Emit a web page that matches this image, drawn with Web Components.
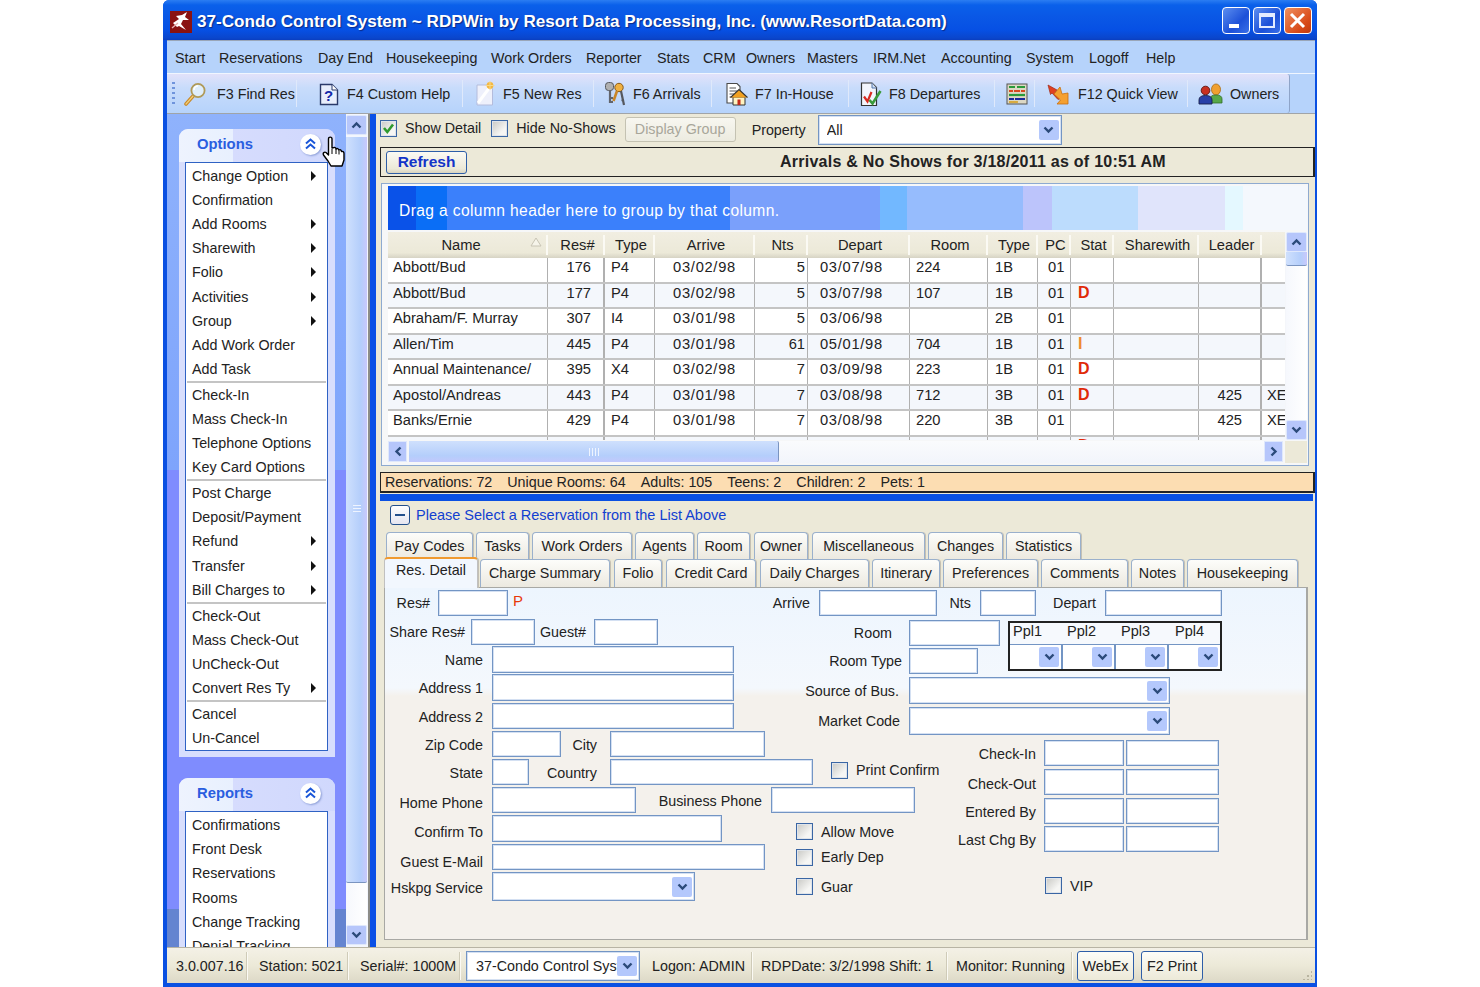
<!DOCTYPE html>
<html>
<head>
<meta charset="utf-8">
<title>RDPWin</title>
<style>
  html, body { margin: 0; padding: 0; background: #fff; }
</style>
</head>
<body>
<rdp-window>
  <rdp-titlebar>37-Condo Control System ~ RDPWin by Resort Data Processing, Inc. (www.ResortData.com)</rdp-titlebar>
  <rdp-menubar items="Start:44|Reservations:99|Day End:68|Housekeeping:105|Work Orders:95|Reporter:71|Stats:46|CRM:43|Owners:61|Masters:66|IRM.Net:68|Accounting:85|System:63|Logoff:57|Help:40"></rdp-menubar>
  <rdp-toolbar></rdp-toolbar>
  <rdp-workspace>
    <rdp-sidebar slot="side">
      <rdp-side-panel heading="Options" hand items="Change Option>|Confirmation|Add Rooms>|Sharewith>|Folio>|Activities>|Group>|Add Work Order|Add Task|-|Check-In|Mass Check-In|Telephone Options|Key Card Options|-|Post Charge|Deposit/Payment|Refund>|Transfer>|Bill Charges to>|-|Check-Out|Mass Check-Out|UnCheck-Out|Convert Res Ty>|-|Cancel|Un-Cancel"></rdp-side-panel>
      <rdp-side-panel heading="Reports" items="Confirmations|Front Desk|Reservations|Rooms|Change Tracking|Denial Tracking"></rdp-side-panel>
    </rdp-sidebar>
    <rdp-main slot="main">
      <rdp-filterbar></rdp-filterbar>
      <rdp-heading title-text="Arrivals &amp; No Shows for 3/18/2011 as of 10:51 AM"></rdp-heading>
      <rdp-grid></rdp-grid>
      <rdp-summary items="Reservations: 72|Unique Rooms: 64|Adults: 105|Teens: 2|Children: 2|Pets: 1"></rdp-summary>
      <rdp-detail heading="Please Select a Reservation from the List Above">
        <rdp-form></rdp-form>
      </rdp-detail>
    </rdp-main>
  </rdp-workspace>
  <rdp-statusbar></rdp-statusbar>
</rdp-window>

<script>
const TEXT = '#222';
const CHEVRON_DOWN = '<svg width="11" height="8" viewBox="0 0 11 8"><path d="M1.5 1.5L5.5 5.5L9.5 1.5" fill="none" stroke="#2b4a7a" stroke-width="2.4"/></svg>';
const CHEVRON_UP = '<svg width="11" height="8" viewBox="0 0 11 8"><path d="M1.5 6.5L5.5 2.5L9.5 6.5" fill="none" stroke="#2b4a7a" stroke-width="2.4"/></svg>';
const CHEVRON_LEFT = '<svg width="8" height="11" viewBox="0 0 8 11"><path d="M6.5 1.5L2.5 5.5L6.5 9.5" fill="none" stroke="#2b4a7a" stroke-width="2.4"/></svg>';
const CHEVRON_RIGHT = '<svg width="8" height="11" viewBox="0 0 8 11"><path d="M1.5 1.5L5.5 5.5L1.5 9.5" fill="none" stroke="#2b4a7a" stroke-width="2.4"/></svg>';

const ICONS = {
  find: '<svg width="24" height="24" viewBox="0 0 24 24"><path d="M3 22L11 13" stroke="#c98a2a" stroke-width="3.6" stroke-linecap="round"/><path d="M3 22L11 13" stroke="#f2cf7a" stroke-width="1.2" stroke-linecap="round"/><circle cx="15" cy="8.5" r="6.6" fill="#dfeefc" stroke="#b09a58" stroke-width="1.8"/><path d="M11 8a4 4 0 0 1 4-4" fill="none" stroke="#fff" stroke-width="1.6"/></svg>',
  help: '<svg width="20" height="24" viewBox="0 0 20 24"><path d="M1.5 2.5H13L18.5 8V22.5H1.5Z" fill="#e8eefc" stroke="#2a3a6a" stroke-width="1.4"/><path d="M13 2.5V8H18.5" fill="#fff" stroke="#2a3a6a" stroke-width="1"/><text x="9.5" y="19" font-family="Liberation Sans" font-weight="700" font-size="15" fill="#1428a8" text-anchor="middle">?</text></svg>',
  newres: '<svg width="20" height="26" viewBox="0 0 20 26"><path d="M2 4H14L17.5 7.5V24H2Z" fill="#eef0fb" stroke="#b4bcdc" stroke-width="1"/><path d="M3 22L15 6" stroke="#fff" stroke-width="3"/><circle cx="15" cy="4.5" r="3.4" fill="#f5b840"/><path d="M15 0V9M10.5 4.5H19.5" stroke="#f7d98a" stroke-width="1"/></svg>',
  keys: '<svg width="22" height="26" viewBox="0 0 22 26"><rect x="1.5" y="1.5" width="8" height="8" rx="3" fill="#b0b0b0" stroke="#55585e"/><path d="M6 9V22M6 17H9M6 21H9" stroke="#62656c" stroke-width="2.2" fill="none"/><circle cx="15" cy="6.5" r="4.2" fill="#efb040" stroke="#8a5a18"/><path d="M13 10L9.5 20" stroke="#c98628" stroke-width="2.6"/><path d="M17 10L20 24" stroke="#55585e" stroke-width="2.2"/><path d="M20 19L17.5 19.5" stroke="#55585e" stroke-width="1.6"/></svg>',
  inhouse: '<svg width="24" height="24" viewBox="0 0 24 24"><path d="M2 1.5H12L15 4.5V21H2Z" fill="#fff" stroke="#4a4a4a" stroke-width="1.1"/><path d="M4.5 6H11M4.5 9H12.5M4.5 12H9M4.5 15H8" stroke="#555" stroke-width="1"/><path d="M8 23V15H20V23Z" fill="#fff3c0" stroke="#333" stroke-width="1"/><path d="M5.5 15.5L14 7.5L22.5 15.5" fill="#f0a020" stroke="#333" stroke-width="1.1"/><rect x="12.5" y="17.5" width="3" height="5.5" fill="#c42a1a"/></svg>',
  depart: '<svg width="24" height="26" viewBox="0 0 24 26"><path d="M2.5 2H13L17.5 6.5V24.5H2.5Z" fill="#f2f5fc" stroke="#333" stroke-width="1.2"/><path d="M13 2V7H17.5" fill="#cfe0f7" stroke="#5577aa" stroke-width="1"/><path d="M5 15.5L8.5 20.5L12.5 11" fill="none" stroke="#d82a20" stroke-width="2.2"/><path d="M10.5 19L13.5 22.5L21.5 10" fill="none" stroke="#3a9a3a" stroke-width="2.6"/></svg>',
  board: '<svg width="22" height="24" viewBox="0 0 22 24"><rect x="1" y="2" width="20" height="20" fill="#dcd8c4" stroke="#555"/><path d="M3 5H9M11 5H19" stroke="#2a9a3a" stroke-width="2.2"/><path d="M3 9H7M8 9H14M15 9H19" stroke="#d84a20" stroke-width="2.2"/><path d="M3 13H19" stroke="#2a9a3a" stroke-width="2.2"/><path d="M3 17H8M9 17H19" stroke="#1a2a9a" stroke-width="2.2"/><path d="M3 20H12" stroke="#d8a020" stroke-width="1.6"/></svg>',
  quick: '<svg width="24" height="24" viewBox="0 0 24 24"><path d="M2 3L11 8L9.5 10L15 16L12 17.5L6 11L4.5 12.5Z" fill="#e04020" stroke="#a02818" stroke-width=".7"/><path d="M8 12L14 5L16 12L22 11V22H11L14.5 18Z" fill="#f5a030" stroke="#c87010" stroke-width=".8"/></svg>',
  owners: '<svg width="26" height="22" viewBox="0 0 26 22"><ellipse cx="18" cy="6.5" rx="4.5" ry="5.5" fill="#f0a030" stroke="#a86a10" stroke-width=".8"/><path d="M12 20V16Q12 12 18 12Q24 12 24 16V20Z" fill="#58a848" stroke="#30702a" stroke-width=".8"/><circle cx="7.5" cy="7.5" r="4.3" fill="#c83020" stroke="#5a1510" stroke-width=".9"/><path d="M1 21V17Q1 12.5 7.5 12.5Q14 12.5 14 17V21Z" fill="#2840a8" stroke="#18204a" stroke-width=".9"/></svg>'
};

class RdpElement extends HTMLElement {
  constructor() {
    super();
    this.attachShadow({ mode: 'open' });
  }
  connectedCallback() {
    this.shadowRoot.innerHTML = this.render();
  }
}

class RdpWindow extends RdpElement {
  render() {
    return `<style>
      :host { display: block; box-sizing: border-box; width: 1154px; height: 987px; margin-left: 163px;
        background: #0a50e2; padding: 0 2px 4px 4px; border-radius: 6px 6px 0 0; overflow: hidden;
        font: 14.3px "Liberation Sans", Arial, sans-serif; color: ${TEXT}; }
      .wrap { display: flex; flex-direction: column; height: 100%; }
    </style><div class="wrap"><slot></slot></div>`;
  }
}

class RdpTitlebar extends RdpElement {
  render() {
    const btn = (cls, inner) => `<span class="btn ${cls}">${inner}</span>`;
    return `<style>
      :host { display: flex; align-items: center; height: 40px; flex: none; margin: 0 -2px 0 -4px; padding: 4px 0 0 7px; box-sizing: border-box;
        background: linear-gradient(#2b7df2 0, #0a60ea 5px, #0a58e6 16px, #0650e4 30px, #0a46cc 38px, #0a3ec0 40px); }
      .logo { width: 22px; height: 22px; flex: none; display: block; }
      .text { margin-left: 5px; flex: 1; color: #fff; font-weight: 700; font-size: 17.13px; text-shadow: 1px 1px 1px #0a2a88; white-space: nowrap; }
      .btns { display: flex; gap: 3px; margin: -3px 5px 0 0; }
      .btn { width: 28px; height: 27px; box-sizing: border-box; border: 1px solid #fff; border-radius: 4px; position: relative; display: block;
        background: linear-gradient(135deg, #5c8ef0, #1c50d8 60%, #3a70e8); }
      .btn.close { background: linear-gradient(135deg, #f09060, #d84a18 70%, #c03a10); }
      .min::after { content: ""; position: absolute; left: 6px; bottom: 5px; width: 10px; height: 4px; background: #fff; }
      .max::after { content: ""; position: absolute; left: 5px; top: 5px; width: 16px; height: 15px; box-sizing: border-box; border: 2px solid #e4ecff; border-top-width: 4px; }
      svg { display: block; margin: 3px; }
    </style>
    <svg class="logo" viewBox="0 0 22 22" style="margin:0"><rect width="22" height="22" fill="#8a1212"/><path d="M3 12L9 8L6 5L12 4L17 1L15 6L19 9L13 9L11 13L16 19L9 15L7 16Z" fill="#fff"/><path d="M2 17L8 12" stroke="#e8b0b0" stroke-width="1.4"/></svg>
    <span class="text"><slot></slot></span>
    <span class="btns">${btn('min', '')}${btn('max', '')}${btn('close', '<svg width="19" height="19" viewBox="0 0 19 19"><path d="M3 3L16 16M16 3L3 16" stroke="#fff" stroke-width="3"/></svg>')}</span>`;
  }
}

class RdpMenubar extends RdpElement {
  render() {
    const items = this.getAttribute('items').split('|').map((it) => {
      const [label, w] = it.split(':');
      return `<span style="width:${w}px">${label}</span>`;
    }).join('');
    return `<style>
      :host { display: flex; align-items: center; flex: none; height: 34px; box-sizing: border-box; padding: 1px 0 0 8px;
        background: #b6d3fb; border-top: 1px solid #9aa6b8; border-bottom: 1px solid #f0f6ff; }
      span { flex: none; white-space: nowrap; }
    </style>${items}`;
  }
}

class RdpToolbar extends RdpElement {
  render() {
    // [icon, label, width of the whole button up to the separator, left padding, icon gap]
    const tools = [
      ['find', 'F3 Find Res', 116, 2, 10],
      ['help', 'F4 Custom Help', 166, 22, 8],
      ['newres', 'F5 New Res', 131, 12, 8],
      ['keys', 'F6 Arrivals', 118, 10, 7],
      ['inhouse', 'F7 In-House', 137, 13, 6],
      ['depart', 'F8 Departures', 146, 10, 6],
      ['board', '', 40, 11, 0],
      ['quick', 'F12 Quick View', 153, 11, 8],
      ['owners', 'Owners', 102, 10, 6],
    ];
    const html = tools.map(([icon, label, w, pad, gap], i) => `
      <span class="tool ${i === tools.length - 1 ? 'last' : ''}" style="width:${w}px;padding-left:${pad}px;gap:${gap}px">
        ${ICONS[icon]}<span class="lab">${label}</span>
      </span>`).join('');
    return `<style>
      :host { display: block; flex: none; height: 40px; background: #b6d3fb; border-bottom: 1px solid #a0a4a8; box-sizing: border-box; }
      .bar { display: flex; align-items: center; height: 39px; width: 1123px; padding-left: 5px; box-sizing: border-box;
        background: linear-gradient(#e2e2fa, #c8dcfb 35%, #b6d3fb); border-right: 1px solid #8ea4c8; border-radius: 0 3px 3px 0; }
      .grip { width: 3px; height: 24px; flex: none; background: repeating-linear-gradient(#6f94dc 0 2px, transparent 2px 5px); margin-right: 6px; }
      .tool { display: flex; align-items: center; height: 27px; box-sizing: border-box; border-right: 1px solid #dfe9fb; flex: none; }
      .tool.last { border-right: 0; }
      .tool svg { flex: none; }
      .lab { white-space: nowrap; }
    </style><div class="bar"><span class="grip"></span>${html}</div>`;
  }
}

class RdpWorkspace extends RdpElement {
  render() {
    return `<style>
      :host { display: flex; flex: 1; min-height: 0; background: #ece9d8; }
      .scroll { width: 22px; flex: none; padding: 1px 1px 2px 0; box-sizing: border-box; background: #f3f6fd; }
      .gray { width: 2px; flex: none; background: #8c8c88; }
      .blue { width: 6px; flex: none; background: #0a50e6; }
      ::slotted([slot=main]) { flex: 1; min-width: 0; }
    </style>
    <slot name="side"></slot>
    <div class="scroll"><rdp-vscroll first="2" thumb="746" grip></rdp-vscroll></div>
    <span class="gray"></span><span class="blue"></span>
    <slot name="main"></slot>`;
  }
}

class RdpVscroll extends RdpElement {
  render() {
    return `<style>
      :host { display: flex; flex-direction: column; height: 100%; }
      .arrow { height: 20px; flex: none; background: #b6c6fb; border: 1px solid #dfe8fc; border-radius: 2px; box-sizing: border-box; display: flex; align-items: center; justify-content: center; }
      .thumb { flex: none; box-sizing: border-box; background: linear-gradient(90deg, #cfe0fd, #b4cefb 70%, #c8c8fc); border-bottom: 1px solid #7a94c0; border-radius: 0 0 2px 2px; display: flex; align-items: center; justify-content: center; }
      .grip { width: 8px; height: 9px; background: repeating-linear-gradient(#eef4ff 0 1px, transparent 1px 3px); }
      .track { flex: 1; background: linear-gradient(90deg, #f6f8fd, #fff); }
    </style>
    <div class="arrow">${CHEVRON_UP}</div>
    <div class="thumb" style="height:${this.getAttribute('thumb')}px;margin-top:${this.getAttribute('first') || 0}px">${this.hasAttribute('grip') ? '<span class="grip"></span>' : ''}</div>
    <div class="track"></div>
    <div class="arrow">${CHEVRON_DOWN}</div>`;
  }
}

class RdpSidebar extends RdpElement {
  render() {
    return `<style>
      :host { display: block; width: 179px; flex: none; height: 100%; overflow: hidden; box-sizing: border-box; padding: 15px 11px 0 12px;
        background: linear-gradient(#8fb2fc 0, #7ea4fc 356px, #7f8cfe 356px, #7f8cfe 795px, #6484d0 795px); }
      ::slotted(rdp-side-panel) { margin-bottom: 21px; }
    </style><slot></slot>`;
  }
}

class RdpSidePanel extends RdpElement {
  render() {
    const rows = this.getAttribute('items').split('|').map((it) => {
      if (it === '-') return '<div class="sep"></div>';
      const more = it.endsWith('>');
      const label = more ? it.slice(0, -1) : it;
      return `<div class="item"><span>${label}</span>${more ? '<i></i>' : ''}</div>`;
    }).join('');
    const hand = this.hasAttribute('hand') ? `<svg class="hand" width="24" height="32" viewBox="0 0 24 32"><path d="M6.5 3C6.5 0.5 10 0.5 10 3V12L12 11.5C13 11 14 12 14 13C15 12 16.5 12.5 16.7 14C18 13.2 19.5 14 19.5 15.5C20.5 15 22 15.8 22 17.5V24L20 30H9L6 25L1.5 19C0.5 17 2.5 15.5 4 16.5L6.5 19Z" fill="#fff" stroke="#000" stroke-width="1.4" stroke-linejoin="round"/><path d="M10 13V18M14 13V18M17 14.5V18.5" stroke="#000" stroke-width="1"/></svg>` : '';
    return `<style>
      :host { display: block; width: 156px; position: relative; background: #d8defd; border-radius: 9px 9px 0 0; padding-bottom: 6px; }
      .head { height: 33px; box-sizing: border-box; display: flex; align-items: center; padding: 0 14px 3px 18px; border-radius: 9px 9px 0 0;
        background: linear-gradient(90deg, #eef3fe 0, #e8f0fe 54px, #d6dcfd 54px, #d0d8fd 100%); }
      .title { flex: 1; color: #2a5ee0; font-weight: 700; font-size: 14.8px; }
      .toggle { width: 21px; height: 21px; border-radius: 50%; background: #fff; box-shadow: 1px 1px 2px #8fa0d8; display: flex; align-items: center; justify-content: center; }
      .list { box-sizing: border-box; margin: 0 7px 0 6px; background: #fff; border: 1px solid #2f62c4; padding: 1px 0 0; }
      .item { display: flex; align-items: center; justify-content: space-between; height: 24.1px; padding: 0 11px 0 6px; box-sizing: border-box; white-space: nowrap; }
      .item i { width: 0; height: 0; border-left: 5px solid #111; border-top: 5px solid transparent; border-bottom: 5px solid transparent; }
      .sep { height: 2px; background: #c4c4c4; margin: 0 1px; }
      .hand { position: absolute; left: 143px; top: 7px; }
    </style>
    <div class="head"><span class="title">${this.getAttribute('heading')}</span>
      <span class="toggle"><svg width="11" height="12" viewBox="0 0 11 12"><path d="M1 5.5L5.5 1.5L10 5.5M1 10.5L5.5 6.5L10 10.5" fill="none" stroke="#1a56d8" stroke-width="2"/></svg></span></div>
    <div class="list">${rows}</div>${hand}`;
  }
}

class RdpMain extends RdpElement {
  render() {
    return `<style>
      :host { display: block; background: #ece9d8; overflow: hidden; }
    </style><slot></slot>`;
  }
}

class RdpCheck extends RdpElement {
  render() {
    const mark = this.hasAttribute('checked') ? '<svg width="13" height="13" viewBox="0 0 13 13"><path d="M2 6L5.3 10L11 2.5" fill="none" stroke="#2e9a2e" stroke-width="2.6"/></svg>' : '';
    return `<style>
      :host { display: inline-flex; align-items: center; gap: 8px; white-space: nowrap; }
      .box { width: 17px; height: 17px; box-sizing: border-box; border: 1px solid #3a66a4; box-shadow: inset 0 0 0 1px #dfe4ea; background: linear-gradient(135deg, #c8c8c4, #f6f6f4 70%); display: flex; align-items: center; justify-content: center; flex: none; }
    </style><span class="box">${mark}</span><span>${this.getAttribute('label') || ''}</span>`;
  }
}

class RdpCombo extends RdpElement {
  render() {
    const w = this.getAttribute('w');
    const h = this.getAttribute('h') || 27;
    return `<style>
      :host { display: flex; align-items: center; box-sizing: border-box; width: ${w}px; height: ${h}px; background: #fff; flex: none;
        border: 1px solid #7395c4; box-shadow: inset 0 0 0 1px #d4e0f2; padding: 0 2px 0 8px; }
      .v { flex: 1; overflow: hidden; white-space: nowrap; }
      .b { width: 20px; height: 20px; flex: none; background: #b4c8fc; border-radius: 2px; display: flex; align-items: center; justify-content: center; }
    </style><span class="v"><slot></slot></span><span class="b">${CHEVRON_DOWN}</span>`;
  }
}

class RdpInput extends RdpElement {
  render() {
    return `<style>
      :host { display: block; flex: none; box-sizing: border-box; width: ${this.getAttribute('w')}px; height: ${this.getAttribute('h') || 26}px;
        background: #fff; border: 1px solid #7395c4; box-shadow: inset 0 0 0 1px #d4e0f2; }
    </style>`;
  }
}

class RdpFilterbar extends RdpElement {
  render() {
    return `<style>
      :host { display: flex; align-items: center; height: 32px; padding: 0 0 0 4px; box-sizing: border-box; }
      rdp-check { margin-top: -4px; }
      .dis { box-sizing: border-box; width: 111px; height: 25px; margin: -2px 0 0 9px; border: 1px solid #c4c2b2; border-radius: 3px; background: linear-gradient(#f8f7f0, #ecebe0); color: #a8a69a; display: flex; align-items: center; justify-content: center; }
      .prop { margin: 0 12px 0 16px; }
      rdp-combo { margin-top: -1px; }
    </style>
    <rdp-check checked label="Show Detail"></rdp-check>
    <rdp-check label="Hide No-Shows" style="margin-left:10px"></rdp-check>
    <span class="dis">Display Group</span>
    <span class="prop">Property</span>
    <rdp-combo w="244" h="30">All</rdp-combo>`;
  }
}

class RdpHeading extends RdpElement {
  render() {
    return `<style>
      :host { display: flex; align-items: center; height: 30px; box-sizing: border-box; margin: 1px 0 0 4px; border: 1px solid #222; border-right-width: 2px; padding-left: 5px; }
      .refresh { box-sizing: border-box; width: 81px; height: 23px; flex: none; border: 1px solid #2e5ea8; border-radius: 3px; background: linear-gradient(#fbfaf4, #ece9d8 80%, #d8d4c0); color: #1234c8; font-weight: 700; font-size: 15.5px; display: flex; align-items: center; justify-content: center; }
      .t { font-weight: 700; font-size: 16px; letter-spacing: .25px; margin-left: 313px; white-space: nowrap; }
    </style><span class="refresh">Refresh</span><span class="t">${this.getAttribute('title-text').replace('&', '&amp;')}</span>`;
  }
}

class RdpGrid extends RdpElement {
  render() {
    const columns = '160px 57px 50px 100px 53px 102px 78px 50px 33px 43px 85px 63px 23px';
    const heads = ['Name', 'Res#', 'Type', 'Arrive', 'Nts', 'Depart', 'Room', 'Type', 'PC', 'Stat', 'Sharewith', 'Leader', ''];
    const data = [
      ['Abbott/Bud', '176', 'P4', '03/02/98', '5', '03/07/98', '224', '1B', '01', '', '', '', ''],
      ['Abbott/Bud', '177', 'P4', '03/02/98', '5', '03/07/98', '107', '1B', '01', 'D', '', '', ''],
      ['Abraham/F. Murray', '307', 'I4', '03/01/98', '5', '03/06/98', '', '2B', '01', '', '', '', ''],
      ['Allen/Tim', '445', 'P4', '03/01/98', '61', '05/01/98', '704', '1B', '01', 'I', '', '', ''],
      ['Annual Maintenance/', '395', 'X4', '03/02/98', '7', '03/09/98', '223', '1B', '01', 'D', '', '', ''],
      ['Apostol/Andreas', '443', 'P4', '03/01/98', '7', '03/08/98', '712', '3B', '01', 'D', '', '425', 'XE'],
      ['Banks/Ernie', '429', 'P4', '03/01/98', '7', '03/08/98', '220', '3B', '01', '', '', '425', 'XE'],
      ['Barnes/Hans', '330', 'F4', '03/01/98', '1', '03/07/98', '222', '1B', '01', 'D', '', '377', 'FA'],
    ];
    const cellClass = ['name', 'res', 'l6', 'ctr', 'nts', 'dep', 'l6', 'l8', 'pc', 'stat', '', 'lead', 'l5'];
    const headRow = heads.map((h, i) => `<div class="h${i === 0 ? ' first' : ''}">${h}${i === 0 ? '<svg class="sort" width="12" height="10" viewBox="0 0 12 10"><path d="M6 1L11 9H1Z" fill="#f6f4ea" stroke="#c8c4b4"/></svg>' : ''}</div>`).join('');
    const rows = data.map((row, r) => `<div class="row ${r % 2 ? 'alt' : ''}">${row.map((v, i) => {
      const colour = v === 'I' ? ' style="color:#ee8a30"' : '';
      return `<div class="c ${cellClass[i]}"${colour}>${v}</div>`;
    }).join('')}</div>`).join('');
    return `<style>
      :host { display: block; box-sizing: border-box; width: 928px; height: 283px; margin: 6px 0 0 5px; border: 1px solid #8eaad0; padding: 2px 1px 0 6px; background: #f6f7f8; font-size: 14.7px; }
      .banner { height: 44px; display: flex; align-items: center; box-sizing: border-box; padding: 5px 0 0 11px; color: #fff; font-size: 15.6px; letter-spacing: .38px; margin-bottom: 2px;
        background: linear-gradient(90deg, #0a52e8 0 28px, #0a6ef6 28px 59px, #3b80fb 59px 342px, #7aa0fb 342px 492px, #72b8ff 492px 519px, #96bcfd 519px 635px, #bcc4fb 635px 664px, #bcdcfd 664px 750px, #e0e4fb 750px 837px, #e4f8ff 837px 855px, #f4f8fd 855px); }
      .mid { display: flex; height: 208px; }
      .table { width: 897px; flex: none; height: 208px; overflow: hidden; }
      .head, .row { display: grid; grid-template-columns: ${columns}; }
      .head { height: 26px; background: linear-gradient(#f1eee2, #ece9d8 80%, #d6d3c4); box-sizing: border-box; padding-bottom: 3px; }
      .h { display: flex; align-items: center; justify-content: center; position: relative; border-right: 2px solid #fbfaf4; box-sizing: border-box; margin: 3px 0 0; padding-left: 4px; white-space: nowrap; }
      .h.first { padding: 0 12px 0 0; }
      .h:last-child { border-right: 0; }
      .sort { position: absolute; right: 4px; top: 2px; }
      .row { height: 25.5px; box-sizing: border-box; border-bottom: 2px solid #c4c4c4; background: #fff; }
      .row.alt { background: #f4f7fc; }
      .c { border-right: 1px solid #b0b0b0; box-sizing: border-box; padding: 0 0 5px; display: flex; align-items: center; white-space: nowrap; overflow: hidden; }
      .c:last-child { border-right: 0; }
      .name { padding-left: 5px; }
      .res { justify-content: flex-end; padding-right: 12px; border-right-width: 2px; }
      .l6 { padding-left: 6px; } .l8 { padding-left: 7px; } .l5 { padding-left: 5px; }
      .ctr { justify-content: center; letter-spacing: .7px; }
      .nts { justify-content: flex-end; padding-right: 2px; }
      .dep { padding-left: 12px; letter-spacing: .7px; }
      .pc { padding-left: 10px; }
      .stat { padding-left: 7px; font-weight: 700; color: #e02a08; font-size: 16px; }
      .lead { justify-content: flex-end; padding-right: 18px; border-right-width: 2px; }
      .vs { width: 22px; flex: none; height: 208px; padding-left: 1px; box-sizing: border-box; background: #f4f6fa; }
      .hs { display: flex; height: 22px; align-items: stretch; margin-top: 1px; }
      .hbtn { width: 19px; flex: none; height: 21px; background: #b6c6fb; border: 1px solid #dfe8fc; box-sizing: border-box; display: flex; align-items: center; justify-content: center; }
      .hthumb { width: 370px; margin-left: 2px; height: 21px; box-sizing: border-box; flex: none; background: linear-gradient(#cfe0fd, #b4cefb 70%, #c2c8fc); border-right: 1px solid #7a94c0; border-radius: 0 2px 2px 0; display: flex; align-items: center; justify-content: center; }
      .hgrip { width: 10px; height: 8px; background: repeating-linear-gradient(90deg, #eef4ff 0 1px, transparent 1px 3px); }
      .htrack { width: 485px; flex: none; background: linear-gradient(#fafbfd, #f2f5fb); }
      .corner { flex: 1; background: #ece9d8; margin-left: 2px; }
    </style>
    <div class="banner">Drag a column header here to group by that column.</div>
    <div class="mid">
      <div class="table"><div class="head">${headRow}</div>${rows}</div>
      <div class="vs"><rdp-vscroll first="0" thumb="14"></rdp-vscroll></div>
    </div>
    <div class="hs"><span class="hbtn">${CHEVRON_LEFT}</span><span class="hthumb"><span class="hgrip"></span></span><span class="htrack"></span><span class="hbtn">${CHEVRON_RIGHT}</span><span class="corner"></span></div>`;
  }
}

class RdpSummary extends RdpElement {
  render() {
    const parts = this.getAttribute('items').split('|').map((t) => `<span>${t}</span>`).join('');
    return `<style>
      :host { display: block; margin: 6px 0 0 4px; }
      .bar { display: flex; gap: 15px; align-items: center; height: 21px; box-sizing: border-box; padding-left: 4px; background: #fcddb2; border: 1px solid #222; border-bottom-width: 2px; border-right-width: 2px; }
      .blue { height: 7px; background: #0a50e2; margin: 1px 2px 0 0; }
    </style><div class="bar">${parts}</div><div class="blue"></div>`;
  }
}

class RdpDetail extends RdpElement {
  render() {
    const row1 = [['Pay Codes', 386, 473], ['Tasks', 476, 529], ['Work Orders', 532, 632], ['Agents', 635, 694], ['Room', 697, 750], ['Owner', 754, 808], ['Miscellaneous', 812, 925], ['Changes', 928, 1003], ['Statistics', 1006, 1081]];
    const row2 = [['Res. Detail', 384, 478], ['Charge Summary', 480, 610], ['Folio', 614, 662], ['Credit Card', 666, 756], ['Daily Charges', 760, 869], ['Itinerary', 872, 940], ['Preferences', 943, 1038], ['Comments', 1041, 1128], ['Notes', 1131, 1184], ['Housekeeping', 1187, 1298]];
    const tabs = (list) => {
      let x = 384;
      return list.map(([t, a, b], i) => {
        const el = `<span class="tab ${t === 'Res. Detail' ? 'on' : ''}" style="width:${b - a}px;margin-left:${a - x}px">${t}</span>`;
        x = b;
        return el;
      }).join('');
    };
    return `<style>
      :host { display: block; margin-left: 8px; }
      .top { display: flex; align-items: center; height: 31px; gap: 6px; padding: 0 0 3px 6px; box-sizing: border-box; color: #1240d0; font-size: 14.5px; }
      .top b { width: 20px; height: 20px; box-sizing: border-box; border: 1px solid #24508c; border-radius: 3px; background: linear-gradient(#fff, #e6e6f0); display: flex; align-items: center; justify-content: center; flex: none; margin-top: -1px; }
      .top b::after { content: ""; width: 10px; height: 2px; background: #24508c; }
      .tabs { display: flex; height: 27px; }
      .tab { box-sizing: border-box; flex: none; display: flex; align-items: center; justify-content: center; border: 1px solid #9ab0cc; border-bottom: 0; border-radius: 4px 4px 0 0; background: linear-gradient(#fdfdfa, #ece9e0); box-shadow: 1px 0 0 #c4c0b4; white-space: nowrap; padding-top: 0; }
      .tabs.two .tab { padding-bottom: 2px; }
      .tabs.two .tab.on { background: #f2f7fe; border: 1px solid #c0c0c0; border-top: 2px solid #f09a30; border-bottom: 0; height: 31px; margin-top: -2px; position: relative; z-index: 1; padding: 0 0 8px; }
      .tabs.two { height: 28px; }
      .panel { box-sizing: border-box; width: 924px; height: 353px; border: 1px solid #a8a8a4; border-right-width: 2px; background: linear-gradient(#edf5fe 0, #f4f8fd 100px, #f4f1ec 108px); padding: 2px 0 0 4px; }
    </style>
    <div class="top"><b></b><span>${this.getAttribute('heading')}</span></div>
    <div class="tabs">${tabs(row1)}</div>
    <div class="tabs two">${tabs(row2)}</div>
    <div class="panel"><slot></slot></div>`;
  }
}

class RdpForm extends RdpElement {
  render() {
    // dy nudges a caption down by that many pixels inside its centred row
    const lab = (w, t, dy = 0) => `<span class="lab" style="width:${w}px;padding-top:${dy * 2}px">${t}</span>`;
    const inp = (w, h) => `<rdp-input w="${w}"${h ? ` h="${h}"` : ''}></rdp-input>`;
    const combo = (w, h) => `<rdp-combo w="${w}" h="${h || 27}"></rdp-combo>`;
    const gap = (w) => `<span class="gap" style="width:${w}px"></span>`;
    const chk = (t, dy = 0) => `<rdp-check label="${t}" style="margin-top:${dy * 2}px"></rdp-check>`;
    // rows given as [top, height, content]; margin comes from the previous row
    const col = (start, rows, width) => {
      let y = start;
      const out = rows.map(([top, h, html]) => {
        const el = `<div class="row" style="margin-top:${top - y}px;height:${h}px">${html}</div>`;
        y = top + h;
        return el;
      }).join('');
      return `<div class="col" style="width:${width}px">${out}</div>`;
    };
    const ppl = `<div class="ppl">
      <div class="ph"><span>Ppl1</span><span>Ppl2</span><span>Ppl3</span><span>Ppl4</span></div>
      <div class="pb">${[1, 2, 3, 4].map(() => `<span class="pc"><i>${CHEVRON_DOWN}</i></span>`).join('')}</div></div>`;

    const leftA = col(590, [
      [590, 26, lab(41, 'Res#') + gap(8) + inp(70) + '<span class="p">P</span>'],
      [619, 26, lab(76, 'Share Res#') + gap(6) + inp(64) + gap(4) + lab(47, 'Guest#') + gap(8) + inp(64)],
      [646, 27, lab(94, 'Name') + gap(9) + inp(242, 27)],
      [674, 27, lab(94, 'Address 1') + gap(9) + inp(242, 27)],
      [703, 26, lab(94, 'Address 2', 1) + gap(9) + inp(242)],
    ], 381);
    const rightA = col(590, [
      [590, 26, lab(40, 'Arrive') + gap(9) + inp(118) + lab(34, 'Nts') + gap(9) + inp(56) + lab(60, 'Depart') + gap(9) + inp(117)],
      [620, 54, `<div class="col" style="width:230px">
          <div class="row" style="height:26px">${lab(122, 'Room') + gap(17) + inp(91)}</div>
          <div class="row" style="height:26px;margin-top:2px">${lab(132, 'Room Type') + gap(7) + inp(69)}</div>
        </div>${gap(8)}${ppl}`],
      [677, 27, lab(129, 'Source of Bus.') + gap(10) + combo(261)],
      [707, 28, lab(130, 'Market Code') + gap(9) + combo(261, 28)],
    ], 460);
    const leftB = col(731, [
      [731, 26, lab(94, 'Zip Code', 1) + gap(9) + inp(69) + lab(36, 'City', 1) + gap(13) + inp(155)],
      [759, 26, lab(94, 'State', 1) + gap(9) + inp(37) + lab(68, 'Country', 1) + gap(13) + inp(203) + gap(18) + chk('Print Confirm', -2)],
      [787, 26, lab(94, 'Home Phone', 3) + gap(9) + inp(144) + lab(126, 'Business Phone', 1) + gap(9) + inp(144)],
      [815, 27, lab(94, 'Confirm To', 3) + gap(9) + inp(230, 27) + gap(74) + chk('Allow Move', 3)],
      [844, 26, lab(94, 'Guest E-Mail', 5) + gap(9) + inp(273) + gap(31) + chk('Early Dep')],
      [872, 29, lab(94, 'Hskpg Service', 1) + gap(9) + combo(203, 29) + gap(101) + chk('Guar')],
    ], 555);
    const logRow = (y, t, dy) => [y, 26, lab(92, t, dy) + gap(8) + inp(80) + gap(2) + inp(93)];
    const rightB = col(731, [
      logRow(740, 'Check-In', 1), logRow(769, 'Check-Out', 2), logRow(798, 'Entered By', 1), logRow(826, 'Last Chg By', 1),
      [877, 17, gap(101) + chk('VIP')],
    ], 290);

    return `<style>
      :host { display: block; }
      .band { display: flex; }
      .band.a { height: 141px; }
      .col { display: flex; flex-direction: column; flex: none; }
      .row { display: flex; align-items: center; flex: none; }
      .lab { flex: none; text-align: right; white-space: nowrap; box-sizing: content-box; }
      .gap { flex: none; display: block; }
      .p { color: #e83808; font-size: 15px; margin: -6px 0 0 5px; }
      .ppl { box-sizing: border-box; width: 214px; height: 50px; border: 2px solid #222; background: #fff; margin-top: 1px; flex: none; align-self: flex-start; }
      .ph { display: flex; height: 22px; align-items: center; background: #f6f9fd; border-bottom: 1px solid #7395c4; padding-bottom: 5px; box-sizing: border-box; }
      .ph span { flex: none; width: 54px; box-sizing: border-box; padding-left: 3px; font-size: 14.5px; }
      .ph span:last-child { width: 48px; }
      .pb { display: flex; height: 24px; }
      .pc { flex: 1; box-sizing: border-box; background: #fff; border-right: 2px solid #7395c4; display: flex; justify-content: flex-end; align-items: center; padding-right: 2px; }
      .pc:last-child { border-right: 0; }
      .pc i { width: 20px; height: 20px; background: #b4c8fc; display: flex; align-items: center; justify-content: center; border-radius: 2px; }
    </style>
    <div class="band a">${leftA}${rightA}</div>
    <div class="band">${leftB}${rightB}</div>`;
  }
}

class RdpStatusbar extends RdpElement {
  render() {
    const cell = (w, t) => `<span class="cell" style="width:${w}px">${t}</span>`;
    const gap = (w) => `<span style="width:${w}px;flex:none"></span>`;
    return `<style>
      :host { display: flex; align-items: center; flex: none; height: 36px; box-sizing: border-box; padding-left: 9px; border-top: 1px solid #b8b4a4;
        background: linear-gradient(#f4f1e6, #ece9d8 50%, #dcd8c6); white-space: nowrap; position: relative; }
      .cell { flex: none; display: flex; align-items: center; height: 28px; border-right: 1px solid #cfcbb8; box-shadow: 1px 0 0 #fbfaf4; box-sizing: border-box; }
      rdp-combo { margin: 0 12px 0 6px; }
      .btn { box-sizing: border-box; height: 30px; border: 1px solid #2e5ea8; border-radius: 3px; background: linear-gradient(#fdfdf8, #ece9d8); display: flex; align-items: center; justify-content: center; flex: none; }
      .grip { position: absolute; right: 3px; bottom: 3px; width: 10px; height: 10px; background: radial-gradient(circle, #b8b4a0 1px, transparent 1.2px) 0 0 / 4px 4px; clip-path: polygon(100% 0, 100% 100%, 0 100%); }
    </style>
    ${cell(71, '3.0.007.16')}${gap(12)}${cell(89, 'Station: 5021')}${gap(12)}${cell(100, 'Serial#: 1000M')}
    <rdp-combo w="174" h="30" style="padding-left:9px">37-Condo Control System</rdp-combo>
    ${cell(100, 'Logon: ADMIN')}${gap(9)}${cell(186, 'RDPDate: 3/2/1998 Shift: 1')}${gap(9)}${cell(116, 'Monitor: Running')}
    <span class="btn" style="width:57px;margin-left:5px">WebEx</span>
    <span class="btn" style="width:62px;margin-left:7px">F2 Print</span>
    <span class="grip"></span>`;
  }
}

customElements.define('rdp-window', RdpWindow);
customElements.define('rdp-titlebar', RdpTitlebar);
customElements.define('rdp-menubar', RdpMenubar);
customElements.define('rdp-toolbar', RdpToolbar);
customElements.define('rdp-workspace', RdpWorkspace);
customElements.define('rdp-vscroll', RdpVscroll);
customElements.define('rdp-sidebar', RdpSidebar);
customElements.define('rdp-side-panel', RdpSidePanel);
customElements.define('rdp-main', RdpMain);
customElements.define('rdp-check', RdpCheck);
customElements.define('rdp-combo', RdpCombo);
customElements.define('rdp-input', RdpInput);
customElements.define('rdp-filterbar', RdpFilterbar);
customElements.define('rdp-heading', RdpHeading);
customElements.define('rdp-grid', RdpGrid);
customElements.define('rdp-summary', RdpSummary);
customElements.define('rdp-detail', RdpDetail);
customElements.define('rdp-form', RdpForm);
customElements.define('rdp-statusbar', RdpStatusbar);
</script>
</body>
</html>
